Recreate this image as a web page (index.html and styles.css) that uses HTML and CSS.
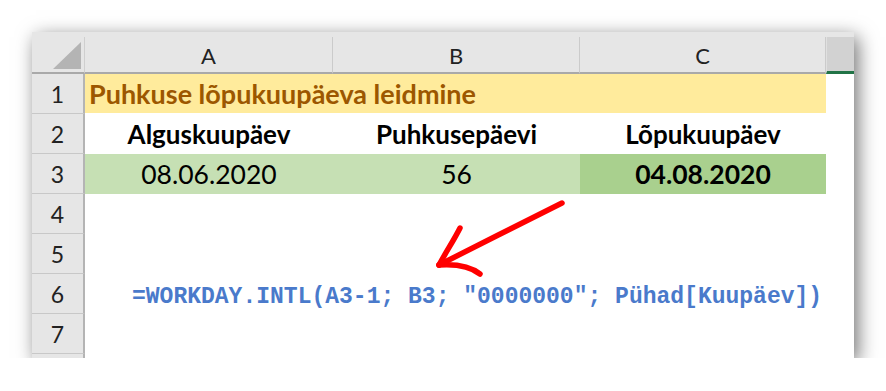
FILE: index.html
```html
<!DOCTYPE html>
<html lang="et">
<head>
<meta charset="utf-8">
<title>Puhkuse lõpukuupäeva leidmine</title>
<link rel="stylesheet" href="styles.css">
</head>
<body>
<div class="sheet">
  <div class="topstrip"></div>
  <div class="grid">
    <div class="corner">
      <svg class="corner-tri" width="28" height="27" viewBox="0 0 28 27"><polygon points="28,0 28,27 0,27" fill="#b4b4b4"/></svg>
    </div>
    <div class="colhead">A</div>
    <div class="colhead">B</div>
    <div class="colhead">C</div>
    <div class="colhead sel"></div>

    <div class="rowhead">1</div>
    <div class="cell title">Puhkuse lõpukuupäeva leidmine</div>
    <div class="cell"></div>

    <div class="rowhead">2</div>
    <div class="cell label">Alguskuupäev</div>
    <div class="cell label">Puhkusepäevi</div>
    <div class="cell label">Lõpukuupäev</div>
    <div class="cell"></div>

    <div class="rowhead">3</div>
    <div class="cell value light">08.06.2020</div>
    <div class="cell value light">56</div>
    <div class="cell value dark">04.08.2020</div>
    <div class="cell"></div>

    <div class="rowhead">4</div>
    <div class="cell wide"></div>

    <div class="rowhead">5</div>
    <div class="cell wide"></div>

    <div class="rowhead">6</div>
    <div class="cell wide formula">=WORKDAY.INTL(A3-1; B3; "0000000"; Pühad[Kuupäev])</div>

    <div class="rowhead">7</div>
    <div class="cell wide"></div>

    <div class="rowhead"></div>
    <div class="cell wide"></div>
  </div>
  <svg class="arrow" width="200" height="110" viewBox="0 0 200 110">
    <g fill="none" stroke="#ff0000" stroke-width="5.5" stroke-linecap="round" stroke-linejoin="round">
      <path d="M170 15 C 140 30, 80 60, 47 77"/>
      <path d="M68 40 C 62 52, 54 64, 47 77"/>
      <path d="M47 77 C 62 76, 78 78, 88 86"/>
    </g>
  </svg>
</div>
</body>
</html>
```

FILE: styles.css
```css
* { box-sizing: border-box; }
html, body {
  margin: 0;
  padding: 0;
  background: #ffffff;
}
body {
  font-family: "Lato", "Open Sans", sans-serif;
}
.sheet {
  position: relative;
  margin: 32px 0 0 32px;
  width: 822px;
  height: 326px;
  overflow: hidden;
  background: #ffffff;
  box-shadow: 4px 5px 18px rgba(0, 0, 0, 0.55);
}
.topstrip {
  height: 5px;
  background: #e6e6e6;
}
.grid {
  display: grid;
  grid-template-columns: 53px 248px 247px 246px 28px;
  grid-template-rows: 37px repeat(8, 40px);
}
.corner {
  background: #e6e6e6;
  border-right: 1px solid #cfcfcf;
  border-bottom: 2px solid #a9a9a9;
  display: flex;
  justify-content: flex-end;
  align-items: flex-end;
  padding: 0 3px 3px 0;
}
.corner-tri { display: block; }
.colhead {
  background: #e6e6e6;
  border-right: 1px solid #cbcbcb;
  border-bottom: 2px solid #a9a9a9;
  display: flex;
  align-items: center;
  justify-content: center;
  font-size: 22px;
  color: #222222;
  padding-top: 2px;
}
.colhead.sel {
  background: #d2d2d2;
  border-right: none;
  border-left: 1px solid #e0e0e0;
  border-bottom: 3px solid #217346;
}
.rowhead {
  background: #e6e6e6;
  border-right: 2px solid #b4b4b4;
  border-bottom: 1px solid #c8c8c8;
  display: flex;
  align-items: center;
  justify-content: center;
  font-size: 23px;
  color: #222222;
}
.cell {
  display: flex;
  align-items: center;
  white-space: nowrap;
  color: #000000;
}
.title {
  grid-column: span 3;
  background: #ffeb9c;
  color: #9c5700;
  font-weight: 700;
  font-size: 27px;
  padding-left: 4px;
  margin-bottom: 1px;
}
.label {
  justify-content: center;
  font-weight: 700;
  font-size: 26px;
}
.value {
  justify-content: center;
  font-size: 26.5px;
}
.light { background: #c6e0b4; }
.dark {
  background: #a9d08e;
  font-weight: 700;
}
.wide { grid-column: span 4; }
.formula {
  font-family: "Liberation Mono", "Courier New", monospace;
  font-weight: 700;
  font-size: 23px;
  color: #4a7acb;
  padding-left: 47px;
  padding-top: 6px;
}
.arrow {
  position: absolute;
  left: 360px;
  top: 156px;
  overflow: visible;
}
```
